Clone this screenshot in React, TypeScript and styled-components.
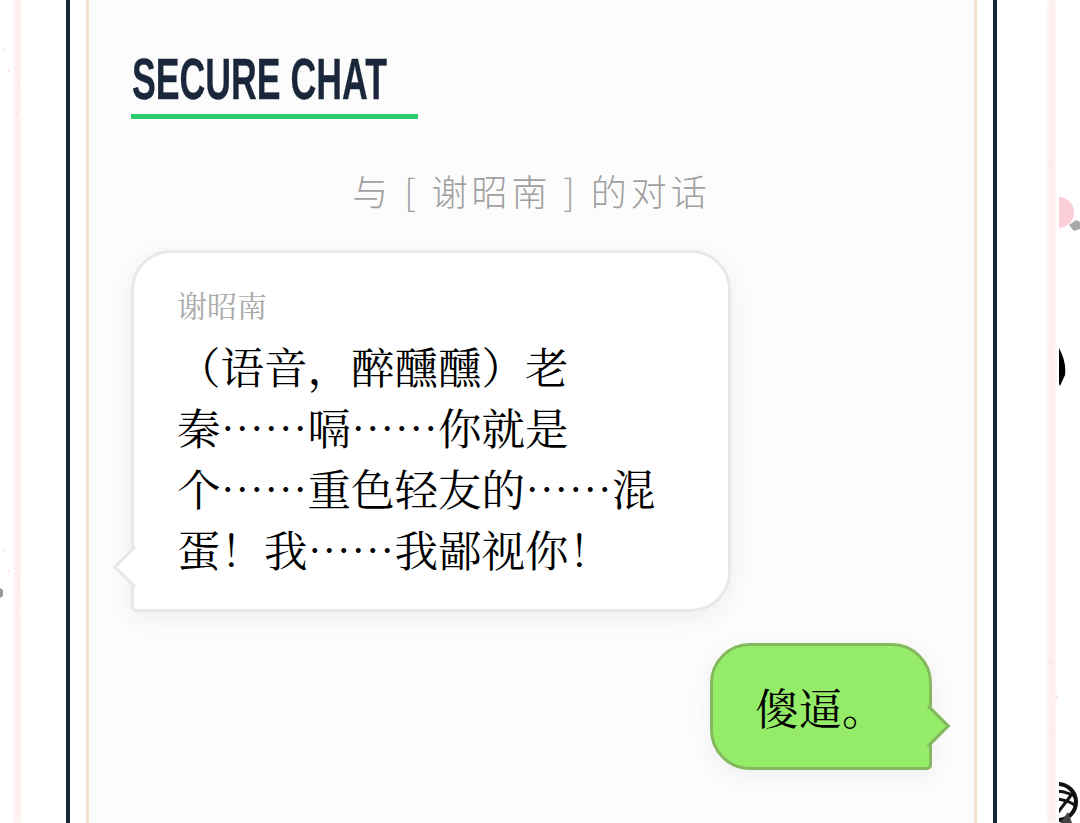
import React from "react";
import styled, { createGlobalStyle } from "styled-components";

const Global = createGlobalStyle`
  html, body { margin: 0; padding: 0; background: #fff; height: 823px; overflow: hidden; }
  body { font-family: "Noto Serif CJK SC", "AR PL UMing CN", "AR PL UKai CN", "WenQuanYi Zen Hei", "SimSun", serif; }
`;

const Backdrop = styled.svg`
  position: absolute;
  inset: 0;
  width: 1080px;
  height: 823px;
`;

const Sheet = styled.main`
  position: relative;
  box-sizing: border-box;
  width: 1026px;
  height: 823px;
  margin-left: 21px;
  padding: 0 50px 0 45px;
  background: #fff;
`;

const Frame = styled.div`
  box-sizing: border-box;
  height: 100%;
  padding: 0 16px;
  border-left: 4px solid #1a2639;
  border-right: 4px solid #1a2639;
`;

const Panel = styled.section`
  box-sizing: border-box;
  height: 100%;
  padding: 44px 42px 0 42px;
  background: #fcfcfc;
  border-left: 3px solid #f1e3cf;
  border-right: 3px solid #f1e3cf;
`;

const Title = styled.h1`
  display: block;
  box-sizing: border-box;
  width: 287px;
  height: 75px;
  margin: 0;
  padding-left: 1px;
  border-bottom: 5px solid #2ecc71;
  color: #1a2639;
  font-family: "Liberation Sans", sans-serif;
  font-size: 58px;
  line-height: 70px;
  font-weight: 700;
  white-space: nowrap;
`;

const TitleText = styled.span`
  display: inline-block;
  transform: scaleX(0.615);
  transform-origin: left center;
  -webkit-text-stroke: 0.3px #1a2639;
`;

const Subtitle = styled.div`
  margin: 46px 0 35px;
  color: #a0a0a0;
  font-family: "Noto Sans CJK SC", sans-serif;
  font-size: 36px;
  font-weight: 300;
  line-height: 50px;
  letter-spacing: 4px;
  text-align: center;
`;

const Thread = styled.div`
  display: flex;
  flex-direction: column;
  gap: 31px;
`;

const Row = styled.div<{ $mine?: boolean }>`
  display: flex;
  justify-content: ${(p) => (p.$mine ? "flex-end" : "flex-start")};
`;

const Bubble = styled.article<{ $mine?: boolean }>`
  position: relative;
  box-sizing: border-box;
  width: ${(p) => (p.$mine ? "auto" : "600px")};
  padding: ${(p) => (p.$mine ? "30px 43.5px 30px 42.5px" : "32px 45px 30px 43px")};
  border: 3px solid ${(p) => (p.$mine ? "#84b85e" : "#e8e8e8")};
  border-radius: ${(p) => (p.$mine ? "40px 40px 5px 40px" : "40px 40px 40px 5px")};
  background: ${(p) => (p.$mine ? "#95ec69" : "#ffffff")};
  box-shadow: 0 6px 24px rgba(0, 0, 0, 0.06);
`;

const Tail = styled.span<{ $mine?: boolean }>`
  position: absolute;
  bottom: ${(p) => (p.$mine ? "26px" : "27px")};
  ${(p) => (p.$mine ? "right: -15px;" : "left: -15px;")}
  width: 27px;
  height: 27px;
  background: ${(p) => (p.$mine ? "#95ec69" : "#ffffff")};
  border: solid ${(p) => (p.$mine ? "#84b85e" : "#e8e8e8")};
  border-width: ${(p) => (p.$mine ? "3px 3px 0 0" : "0 0 3px 3px")};
  transform: rotate(45deg);
`;

const Sender = styled.div`
  margin-bottom: 12px;
  color: #aaaaaa;
  font-size: 30px;
  line-height: 38px;
`;

const Message = styled.p`
  margin: 0;
  color: #000;
  font-size: 43.5px;
  line-height: 61px;
`;

export default function App() {
  return (
    <div lang="zh-CN">
      <Global />
      <Backdrop viewBox="0 0 1080 823" aria-hidden="true">
        <defs>
          <filter id="soft"><feGaussianBlur stdDeviation="1" /></filter>
          <clipPath id="edge"><rect x="1059" y="0" width="21" height="823" /></clipPath>
        </defs>
        <g filter="url(#soft)" fill="#fff0f0">
          <rect x="14" y="0" width="7" height="823" />
          <rect x="1047" y="0" width="9" height="823" />
        </g>
        <g fill="#fde2e6">
          <circle cx="4" cy="50" r="1" /><circle cx="9" cy="71" r="1" /><circle cx="18" cy="84" r="1.5" />
          <circle cx="17" cy="113" r="1.5" /><circle cx="4" cy="550" r="1" /><circle cx="9" cy="571" r="1" />
          <circle cx="18" cy="584" r="1.5" /><circle cx="17" cy="613" r="1.5" /><circle cx="1051" cy="163" r="1.5" />
          <circle cx="1050" cy="352" r="1.5" /><circle cx="1051" cy="663" r="1.5" /><circle cx="1057" cy="697" r="1.5" />
          <circle cx="1052" cy="732" r="1.5" />
        </g>
        <g clipPath="url(#edge)">
          <path d="M1056 196 Q1074 198 1074 214 Q1073 226 1056 229 Z" fill="#fbcdd8" />
          <path d="M1069 225 L1076 220 L1080 222 L1080 229 L1074 231 Z" fill="#a8a8a8" />
          <path d="M1056 343 Q1067 360 1065 375 L1060 386 L1056 378 Z" fill="#000" />
          <circle cx="1058" cy="802" r="18" fill="none" stroke="#111" strokeWidth="4" />
          <path d="M1056 791 Q1068 792 1076 797 M1056 799 Q1068 800 1076 806 M1056 815 L1072 794" fill="none" stroke="#111" strokeWidth="3" />
          <path d="M1060 823 L1068 812 L1072 823 Z" fill="#444" />
        </g>
        <path d="M0 588 L3 590 L3 596 L0 598 Z" fill="#999" />
      </Backdrop>
      <Sheet>
        <Frame>
          <Panel>
            <Title><TitleText>SECURE CHAT</TitleText></Title>
            <Subtitle>与 [ 谢昭南 ] 的对话</Subtitle>
            <Thread>
              <Row>
                <Bubble>
                  <Tail />
                  <Sender>谢昭南</Sender>
                  <Message>（语音，醉醺醺）老秦……嗝……你就是个……重色轻友的……混蛋！我……我鄙视你！</Message>
                </Bubble>
              </Row>
              <Row $mine>
                <Bubble $mine>
                  <Tail $mine />
                  <Message>傻逼。</Message>
                </Bubble>
              </Row>
            </Thread>
          </Panel>
        </Frame>
      </Sheet>
    </div>
  );
}
